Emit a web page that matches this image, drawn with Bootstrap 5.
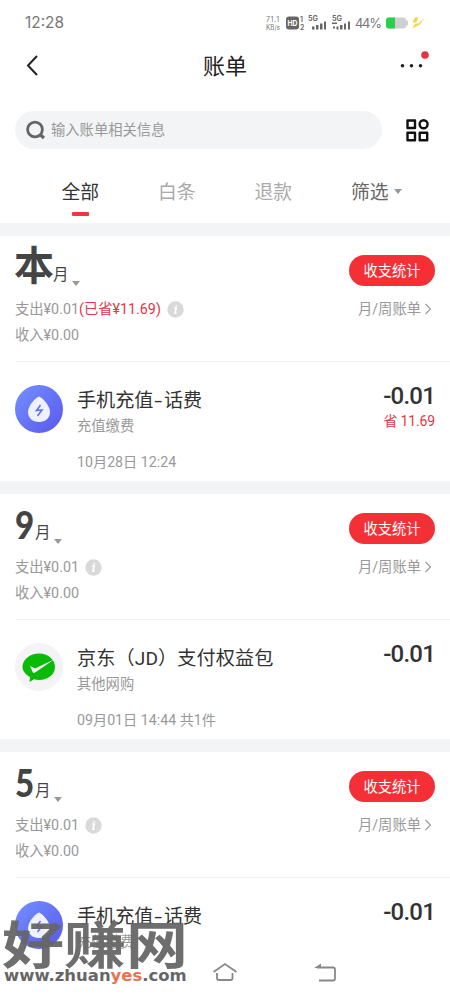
<!DOCTYPE html>
<html lang="zh-CN">
<head>
<meta charset="utf-8">
<meta name="viewport" content="width=device-width, initial-scale=1">
<title>账单</title>
<link href="https://cdn.jsdelivr.net/npm/bootstrap@5.3.0/dist/css/bootstrap.min.css" rel="stylesheet">
<style>
body{width:450px;height:1000px;overflow:hidden;position:relative;background:#fff;color:#333;font-family:Roboto,"Noto Sans CJK SC",sans-serif;font-size:14.3px;line-height:20px;white-space:nowrap}
svg{display:block;flex:none}
.status-bar{height:44px;padding:2px 25px 0 25px;color:#777;font-family:Inter,"Noto Sans CJK SC",sans-serif}
.clock{font-size:15.4px}
.title-bar{height:44px;font-size:22px;color:#222;padding-top:2px}
.search-row{height:82px;padding:2px 21px 0 15px}
.search-box{width:367px;height:38px;background:#f3f4f6;color:#999;padding-left:11px}
.tabs{height:53px;padding:0 32px;font-size:18.8px;color:#aaa}
.tabs>div{height:46px;line-height:46px}
.tabs .active{color:#333}
.tabs .active::after{content:"";position:absolute;left:40px;bottom:0;width:17px;height:4px;background:#e93943;border-radius:1px}
.band{height:13px;background:#f3f4f6}
.month{height:245px;padding:0 15px}
.month-head{height:60px;color:#444}
.big{font-weight:700;color:#444}
.han{font-size:40px;line-height:62px;width:38px;text-indent:-1px}
.num{font-family:Lato,sans-serif;font-weight:900;font-size:38px;line-height:60px;width:20px;transform:scaleX(.87);transform-origin:0 0}
.yue{font-size:15.5px;line-height:20px;margin-top:29px}
.stat-btn{margin-top:19px;width:86px;height:31px;border-radius:16px;background:#f52f36;color:#fff;font-size:14.3px;padding:2px 0 0;line-height:29px;border:0}
.sum{height:26px;color:#999}
.save{color:#de3945}
.saved{font-size:14px;letter-spacing:-.15px;line-height:20px;margin-top:4px}
.line{height:1px;background:#f3f3f4;margin-right:-15px;margin-top:13px}
.entry{padding-top:23px;gap:14px}
.name{font-size:19.1px;line-height:32px;height:30px;color:#333}
.dash{display:inline-block;width:10.5px;text-align:center;transform:scaleX(1.5)}
.sub{color:#999;line-height:22px}
.when{color:#999;line-height:22px;margin-top:14px;font-size:14.2px}
.amt{font-size:24px;font-weight:500;line-height:22px;color:#333;letter-spacing:-.8px}
.sysnav{left:0;right:0;bottom:0;height:51px;background:#fff}
.home{left:212px;top:13px}.back{left:314px;top:14px}
.stamp{left:3px;top:919px;color:#666;font-weight:700}
.stamp-a{font-family:"Noto Sans CJK SC",sans-serif;font-size:62px;line-height:50px;height:50px;transform:scaleY(.82);transform-origin:0 50%;position:relative;top:-2px;left:-1px;opacity:.94}
.stamp-b{font-family:"DejaVu Sans",sans-serif;font-size:15.6px;line-height:14px;margin-left:1px;transform:scaleX(1.055);transform-origin:0 0}
.stamp-b span{color:#ee704f}
</style>
<script src="https://cdn.jsdelivr.net/npm/bootstrap@5.3.0/dist/js/bootstrap.bundle.min.js"></script>
</head>
<body>
<svg width="0" height="0" class="position-absolute"><defs>
<linearGradient id="blue" x1="0" y1="0" x2="1" y2="1"><stop stop-color="#7390ff"/><stop offset="1" stop-color="#5958eb"/></linearGradient>
<symbol id="info" viewBox="0 0 17 17"><circle cx="8.5" cy="8.5" r="8.2" fill="#d9d9d9"/><path d="M7 7h2.2l-1.3 5.2h1.7M9.3 4v1.5" fill="none" stroke="#fff" stroke-width="1.7"/></symbol>
<symbol id="caret" viewBox="0 0 8 5"><path d="M0 0h8L4 5z" fill="#999"/></symbol>
<symbol id="chev" viewBox="0 0 8 12"><path d="M1.5 1l5 5-5 5" fill="none" stroke="#999" stroke-width="1.1"/></symbol>
<symbol id="drop" viewBox="0 0 48 48"><circle cx="24" cy="24" r="24" fill="url(#blue)"/><path d="M24 11.500C26 11.500 35 20 35 27C35 33 30.500 37 24 37S13 33 13 27C13 20 22 11.500 24 11.500z" fill="#eef2ff"/><path d="M25.500 20l-4 5.500 5.500-.5-4.500 6" fill="none" stroke="#6570ee" stroke-width="1.600"/></symbol>
</defs></svg>

<header class="status-bar d-flex align-items-center justify-content-between">
  <div class="clock">12:28</div>
  <svg width="162" height="22" viewBox="0 0 162 22" fill="#777" font-family="Inter">
    <text x="3" y="9.500" font-size="7" textLength="13">71.1</text><text x="3" y="17.500" font-size="7" textLength="14" lengthAdjust="spacingAndGlyphs">KB/s</text>
    <rect x="23" y="4.500" width="13" height="13" rx="3" fill="#666"/><text x="24.500" y="14" font-size="8" font-weight="700" fill="#fff" textLength="10" lengthAdjust="spacingAndGlyphs">HD</text>
    <g fill="#666" font-weight="600"><text x="37" y="9.500" font-size="7">1</text><text x="37" y="17.500" font-size="7">2</text>
    <text x="45" y="9" font-size="8" textLength="10" lengthAdjust="spacingAndGlyphs">5G</text><text x="69" y="9" font-size="8" textLength="10" lengthAdjust="spacingAndGlyphs">5G</text></g>
    <path d="M49 14.500h2.500v3H49zM53 13h2.500v4.500H53zM57 11.500h2.500v6H57zM61 9.500h2v8h-2zM69 10.500h5v1.500h-5zM70 14.500h2v2h-2zM73.500 14.500h2v3h-2zM77 13h2.500v4.500H77zM81 11.500h2v6h-2zM85 9.500h2v8h-2z" fill="#666"/>
    <text x="92" y="16" font-size="13" textLength="27">44%</text>
    <path d="M126 5.500h14q3 0 3 2.500 2 0 2 2v2q0 2-2 2 0 2.500-3 2.500h-14q-3 0-3-3v-5q0-3 3-3z" fill="#cfcfd1"/><path d="M126 5.500h6v11h-6q-3 0-3-3v-5q0-3 3-3z" fill="#25d24a"/>
    <path d="M152 5.500h3.500l-2.500 5h-3.500zM162 5.500l-6.500 6h-3l-3.500 5 8-4 1.500-2.500z" fill="#f7d33d"/>
  </svg>
</header>
<div class="title-bar position-relative d-flex align-items-center justify-content-center">
  <svg class="position-absolute" style="left:25px;top:10px" width="14" height="23" viewBox="0 0 14 23"><path d="M12 2L3 11.500 12 21" fill="none" stroke="#222" stroke-width="2"/></svg>
  账单
  <svg class="position-absolute" style="left:399px;top:5px" width="32" height="22"><g fill="#222"><circle cx="3.500" cy="16.700" r="1.800"/><circle cx="12.500" cy="16.700" r="1.800"/><circle cx="21.500" cy="16.700" r="1.800"/></g><circle cx="26" cy="6" r="3.800" fill="#e9323c"/></svg>
</div>
<div class="search-row d-flex align-items-center justify-content-between">
  <div class="search-box rounded-pill d-flex align-items-center gap-1">
    <svg width="20" height="20" viewBox="0 0 20 20" fill="none" stroke="#646569" stroke-width="2.800"><circle cx="9" cy="9.500" r="7.400"/><path d="M14.500 15l3.500 3" stroke-width="3.200"/></svg><span style="margin-left:1px">输入账单相关信息</span>
  </div>
  <svg width="23" height="23" viewBox="0 0 23 23" fill="none" stroke="#111" stroke-width="2.400" stroke-linejoin="round"><path d="M1.500 1.500h7.500v7.500H1.500zM1.500 13.700h7.500v7.500H1.500zM13.700 13.700h7.500v7.500h-7.500z"/><circle cx="17.600" cy="5.300" r="4"/></svg>
</div>
<nav class="tabs row g-0 text-center">
  <div class="col active position-relative">全部</div><div class="col">白条</div><div class="col">退款</div>
  <div class="col position-relative" style="color:#666">筛选<svg class="position-absolute" style="left:72px;top:19px" width="8" height="5"><use href="#caret"/></svg></div>
</nav>
<div class="band"></div>

<section class="month">
  <div class="month-head d-flex">
    <div class="big han">本</div><div class="yue">月</div><svg style="margin:45px 0 0 3px" width="8" height="5"><use href="#caret"/></svg>
    <button class="btn stat-btn ms-auto">收支统计</button>
  </div>
  <div class="sum d-flex align-items-center"><span>支出¥0.01</span><span class="save">(已省¥11.69)</span><svg style="margin-left:6px" width="17" height="17"><use href="#info"/></svg><span class="ms-auto">月/周账单</span><svg style="margin:0 3px" width="8" height="12"><use href="#chev"/></svg></div>
  <div class="sum d-flex align-items-center">收入¥0.00</div>
  <div class="line"></div>
  <div class="entry d-flex">
    <svg width="48" height="48"><use href="#drop"/></svg>
    <div><div class="name">手机充值<span class="dash">-</span>话费</div><div class="sub">充值缴费</div><div class="when">10月28日 12:24</div></div>
    <div class="ms-auto text-end"><div class="amt">-0.01</div><div class="save saved">省 11.69</div></div>
  </div>
</section>
<div class="band"></div>

<section class="month">
  <div class="month-head d-flex">
    <div class="big num">9</div><div class="yue">月</div><svg style="margin:45px 0 0 3px" width="8" height="5"><use href="#caret"/></svg>
    <button class="btn stat-btn ms-auto">收支统计</button>
  </div>
  <div class="sum d-flex align-items-center"><span>支出¥0.01</span><svg style="margin-left:6px" width="17" height="17"><use href="#info"/></svg><span class="ms-auto">月/周账单</span><svg style="margin:0 3px" width="8" height="12"><use href="#chev"/></svg></div>
  <div class="sum d-flex align-items-center">收入¥0.00</div>
  <div class="line"></div>
  <div class="entry d-flex">
    <svg width="48" height="48" viewBox="0 0 48 48"><circle cx="24" cy="24" r="24" fill="#f4f4f7"/><path d="M24 10.500c9 0 16 6 16 13.500s-7 13-16 13q-3 0-5-.8L14.500 39l.5-5C10.500 31.500 7.500 28 7.500 24 7.500 16.500 15 10.500 24 10.500z" fill="#09bb07"/><path d="M15 23l5 2.500L39 16.500 20 29.500q-1.500.8-2.300-.6z" fill="#fff"/></svg>
    <div><div class="name" style="letter-spacing:.15px">京东（JD）支付权益包</div><div class="sub">其他网购</div><div class="when">09月01日 14:44 共1件</div></div>
    <div class="ms-auto"><div class="amt">-0.01</div></div>
  </div>
</section>
<div class="band"></div>

<section class="month">
  <div class="month-head d-flex">
    <div class="big num">5</div><div class="yue">月</div><svg style="margin:45px 0 0 3px" width="8" height="5"><use href="#caret"/></svg>
    <button class="btn stat-btn ms-auto">收支统计</button>
  </div>
  <div class="sum d-flex align-items-center"><span>支出¥0.01</span><svg style="margin-left:6px" width="17" height="17"><use href="#info"/></svg><span class="ms-auto">月/周账单</span><svg style="margin:0 3px" width="8" height="12"><use href="#chev"/></svg></div>
  <div class="sum d-flex align-items-center">收入¥0.00</div>
  <div class="line"></div>
  <div class="entry d-flex">
    <svg width="48" height="48"><use href="#drop"/></svg>
    <div><div class="name">手机充值<span class="dash">-</span>话费</div><div class="sub">充值缴费</div></div>
    <div class="ms-auto"><div class="amt">-0.01</div></div>
  </div>
</section>

<footer class="sysnav position-absolute">
  <svg class="home position-absolute" width="26" height="20" viewBox="0 0 26 20" fill="none" stroke="#888" stroke-width="1.800"><path d="M1.500 10L13 2l11.500 8M5 11v5q0 2 2 2h11.500q2 0 2-2v-5"/></svg>
  <svg class="back position-absolute" width="23" height="20" viewBox="0 0 23 20"><path d="M3 4.500h16q2 0 2 2v9q0 2-2 2H5" fill="none" stroke="#888" stroke-width="1.800"/><path d="M0 5L7 .5V5z" fill="#888"/></svg>
</footer>
<div class="stamp position-absolute"><div class="stamp-a">好赚网</div><div class="stamp-b">www.zhuan<span>yes</span>.com</div></div>
</body>
</html>
